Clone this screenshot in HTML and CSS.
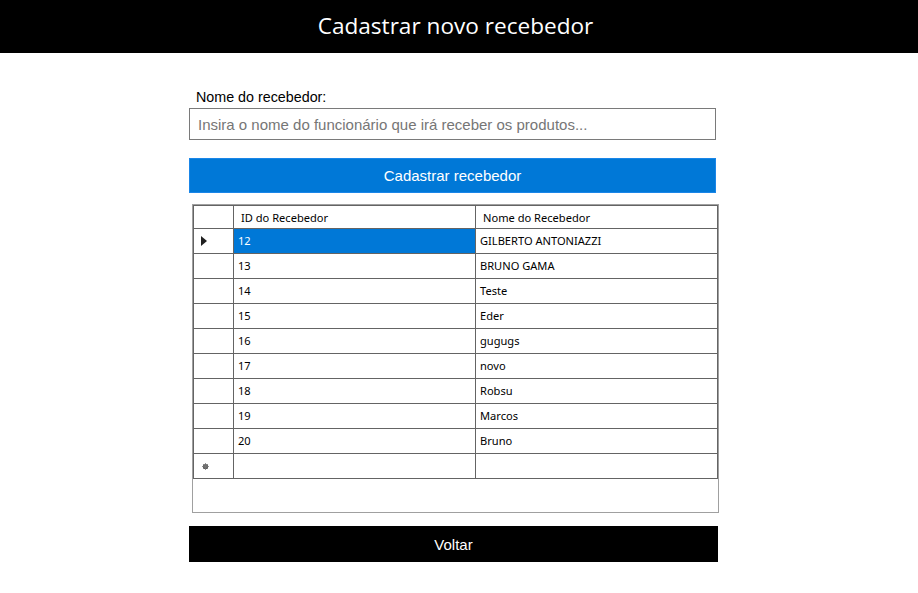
FILE: index.html
```html
<!DOCTYPE html>
<html lang="pt">
<head>
<meta charset="utf-8">
<title>Cadastrar novo recebedor</title>
<link rel="stylesheet" href="styles.css">
</head>
<body>
<header class="topbar">Cadastrar novo recebedor</header>
<main class="content">
  <label class="field-label" for="nome">Nome do recebedor:</label>
  <input class="name-input" id="nome" type="text" placeholder="Insira o nome do funcionário que irá receber os produtos...">
  <button class="btn-primary" type="button">Cadastrar recebedor</button>
  <div class="grid">
    <div class="table">
      <div class="row head">
        <div class="cell rh"></div>
        <div class="cell c1">ID do Recebedor</div>
        <div class="cell c2">Nome do Recebedor</div>
      </div>
      <div class="row">
        <div class="cell rh"><svg class="arrow" width="6" height="10" viewBox="0 0 6 10"><path d="M0 0 L6 5 L0 10 Z" fill="#202020"/></svg></div>
        <div class="cell c1 selected">12</div>
        <div class="cell c2">GILBERTO ANTONIAZZI</div>
      </div>
      <div class="row"><div class="cell rh"></div><div class="cell c1">13</div><div class="cell c2">BRUNO GAMA</div></div>
      <div class="row"><div class="cell rh"></div><div class="cell c1">14</div><div class="cell c2">Teste</div></div>
      <div class="row"><div class="cell rh"></div><div class="cell c1">15</div><div class="cell c2">Eder</div></div>
      <div class="row"><div class="cell rh"></div><div class="cell c1">16</div><div class="cell c2">gugugs</div></div>
      <div class="row"><div class="cell rh"></div><div class="cell c1">17</div><div class="cell c2">novo</div></div>
      <div class="row"><div class="cell rh"></div><div class="cell c1">18</div><div class="cell c2">Robsu</div></div>
      <div class="row"><div class="cell rh"></div><div class="cell c1">19</div><div class="cell c2">Marcos</div></div>
      <div class="row"><div class="cell rh"></div><div class="cell c1">20</div><div class="cell c2">Bruno</div></div>
      <div class="row">
        <div class="cell rh"><svg class="star" width="7" height="7" viewBox="0 0 7 7"><circle cx="3.5" cy="3.5" r="2.6" fill="#555"/><path d="M3.5 0 V7 M0 3.5 H7 M1 1 L6 6 M6 1 L1 6" stroke="#777" stroke-width="0.8"/></svg></div>
        <div class="cell c1"></div>
        <div class="cell c2"></div>
      </div>
    </div>
  </div>
  <button class="btn-back" type="button">Voltar</button>
</main>
</body>
</html>
```

FILE: styles.css
```css
* { box-sizing: border-box; }

body {
  margin: 0;
  background: #ffffff;
  font-family: "Liberation Sans", Arial, sans-serif;
}

.topbar {
  height: 53px;
  background: #000000;
  color: #ffffff;
  display: flex;
  align-items: center;
  justify-content: center;
  font-family: "Open Sans", "Noto Sans", sans-serif;
  font-size: 22.6px;
  padding-bottom: 2px;
  padding-right: 7px;
}

.content {
  display: flex;
  flex-direction: column;
  align-items: flex-start;
  padding-left: 189px;
}

.field-label {
  display: block;
  margin: 36px 0 0 7px;
  font-size: 14.3px;
  line-height: 17px;
  color: #000000;
}

.name-input {
  margin-top: 2px;
  width: 527px;
  height: 32px;
  border: 1px solid #7a7a7a;
  padding: 0 8px;
  font-family: "Liberation Sans", Arial, sans-serif;
  font-size: 15px;
  color: #000;
  outline: none;
}

.name-input::placeholder {
  color: #767676;
}

.btn-primary {
  margin-top: 18px;
  width: 527px;
  height: 35px;
  background: #0078d7;
  border: 1px solid #1a86e8;
  color: #ffffff;
  font-family: "Liberation Sans", Arial, sans-serif;
  font-size: 15px;
  padding: 0;
}

.grid {
  margin: 11px 0 0 3px;
  width: 527px;
  height: 309px;
  border: 1px solid #a0a0a0;
  background: #ffffff;
}

.table {
  border-top: 1px solid #646464;
  border-left: 1px solid #646464;
  width: 525px;
}

.row {
  display: flex;
  height: 25px;
}

.row.head {
  height: 23px;
}

.cell {
  border-right: 1px solid #646464;
  border-bottom: 1px solid #646464;
  font-family: "Noto Sans", "Open Sans", sans-serif;
  font-size: 11.1px;
  color: #000000;
  display: flex;
  align-items: center;
  padding-left: 4px;
  padding-bottom: 1px;
  white-space: nowrap;
}

.cell.rh {
  width: 40px;
  padding-left: 0;
  padding-bottom: 0;
  justify-content: flex-start;
}

.cell.c1, .cell.c2 {
  width: 242px;
}

.row.head .cell.c1, .row.head .cell.c2 {
  padding-left: 7px;
  padding-bottom: 0;
  padding-top: 1px;
}

.cell.selected {
  background: #0078d7;
  color: #ffffff;
}

.arrow {
  margin-left: 7px;
}

.star {
  margin-left: 8px;
}

.btn-back {
  margin-top: 13px;
  width: 529px;
  height: 36px;
  background: #000000;
  border: none;
  color: #ffffff;
  font-family: "Liberation Sans", Arial, sans-serif;
  font-size: 15px;
  padding: 0;
}
```
